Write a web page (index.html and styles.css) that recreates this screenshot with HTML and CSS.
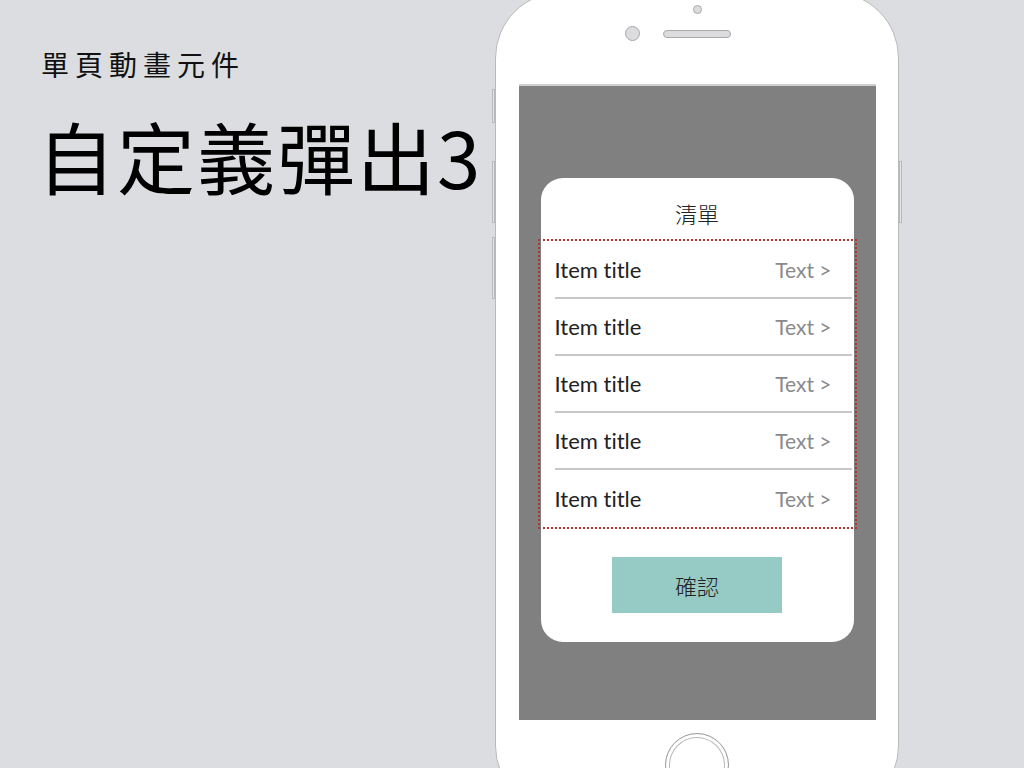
FILE: index.html
```html
<!DOCTYPE html>
<html lang="zh-Hant">
<head>
    <meta charset="UTF-8">
    <meta name="viewport" content="width=device-width, initial-scale=1.0">
    <title>單頁動畫元件 - 自定義彈出3</title>
    <link rel="stylesheet" href="styles.css">
</head>
<body>
    <div class="slide">
        <div class="intro">
            <div class="subtitle">單頁動畫元件</div>
            <h1 class="title">自定義彈出3</h1>
        </div>

        <div class="phone">
            <div class="side-btn side-mute"></div>
            <div class="side-btn side-vol-up"></div>
            <div class="side-btn side-vol-down"></div>
            <div class="side-btn side-power"></div>

            <div class="phone-top">
                <div class="sensor"></div>
                <div class="earpiece">
                    <div class="camera"></div>
                    <div class="speaker"></div>
                    <div></div>
                </div>
            </div>

            <div class="screen">
                <div class="modal">
                    <div class="modal-title">清單</div>
                    <ul class="list">
                        <li class="list-row">
                            <span class="item-title">Item title</span>
                            <span class="item-detail">Text &gt;</span>
                        </li>
                        <li class="list-row">
                            <span class="item-title">Item title</span>
                            <span class="item-detail">Text &gt;</span>
                        </li>
                        <li class="list-row">
                            <span class="item-title">Item title</span>
                            <span class="item-detail">Text &gt;</span>
                        </li>
                        <li class="list-row">
                            <span class="item-title">Item title</span>
                            <span class="item-detail">Text &gt;</span>
                        </li>
                        <li class="list-row">
                            <span class="item-title">Item title</span>
                            <span class="item-detail">Text &gt;</span>
                        </li>
                    </ul>
                    <div class="modal-footer">
                        <button class="confirm-btn">確認</button>
                    </div>
                </div>
            </div>

            <div class="phone-bottom">
                <div class="home-btn"></div>
            </div>
        </div>
    </div>
</body>
</html>
```

FILE: styles.css
```css
body {
    margin: 0;
    padding: 0;
    background-color: #dcdde0;
    font-family: "Noto Sans CJK TC", "Liberation Sans", sans-serif;
    overflow: hidden;
    width: 1024px;
    height: 768px;
}

.slide {
    display: flex;
    width: 1024px;
    height: 768px;
    overflow: hidden;
}

/* Текстовая часть слева */
.intro {
    width: 495px;
    padding: 40px 0 0 41px;
    box-sizing: border-box;
}

.subtitle {
    font-size: 28px;
    line-height: 48px;
    letter-spacing: 6px;
    color: #111;
    font-weight: 400;
}

.title {
    margin: 17px 0 0 -4px;
    font-size: 78px;
    line-height: 100px;
    font-weight: 400;
    letter-spacing: 2px;
    color: #000;
}

/* Телефон */
.phone {
    position: relative;
    flex-shrink: 0;
    width: 404px;
    height: 820px;
    margin-top: -8px;
    background: #fff;
    border: 1px solid #b9b9bb;
    border-radius: 66px;
    box-sizing: border-box;
    display: flex;
    flex-direction: column;
    align-items: center;
}

.side-btn {
    position: absolute;
    width: 3px;
    background: #e4e4e6;
    border: 1px solid #b9b9bb;
    box-sizing: border-box;
}

.side-mute {
    left: -4px;
    top: 96px;
    height: 34px;
}

.side-vol-up {
    left: -4px;
    top: 168px;
    height: 62px;
}

.side-vol-down {
    left: -4px;
    top: 244px;
    height: 62px;
}

.side-power {
    right: -4px;
    top: 168px;
    height: 62px;
}

.phone-top {
    width: 100%;
    height: 91px;
    display: flex;
    flex-direction: column;
    align-items: center;
}

.sensor {
    width: 9px;
    height: 9px;
    margin-top: 12px;
    border-radius: 50%;
    background: #dcdcde;
    border: 1px solid #a9a9ab;
    box-sizing: border-box;
}

.earpiece {
    width: 100%;
    margin-top: 12px;
    display: grid;
    grid-template-columns: 1fr auto 1fr;
    align-items: center;
}

.camera {
    justify-self: end;
    width: 15px;
    height: 15px;
    margin-right: 23px;
    border-radius: 50%;
    background: #dcdcde;
    border: 1px solid #a9a9ab;
    box-sizing: border-box;
}

.speaker {
    width: 68px;
    height: 8px;
    border-radius: 4px;
    background: #dcdcde;
    border: 1px solid #a9a9ab;
    box-sizing: border-box;
}

/* Экран */
.screen {
    width: 357px;
    height: 636px;
    background: #808080;
    border-top: 2px solid #cfcfd1;
    box-sizing: border-box;
    padding: 92px 22px 0 22px;
}

.modal {
    height: 464px;
    background: #fff;
    border-radius: 22px;
    display: flex;
    flex-direction: column;
}

.modal-title {
    padding-top: 19px;
    height: 64px;
    box-sizing: border-box;
    text-align: center;
    font-size: 22px;
    line-height: 32px;
    font-weight: 300;
    color: #222;
}

.list {
    list-style: none;
    margin: 0;
    padding: 0;
    outline: 2px dotted #b8322a;
    outline-offset: 1px;
}

.list-row {
    display: flex;
    justify-content: space-between;
    align-items: center;
    height: 57px;
    margin: 0 2px 0 14px;
    padding-right: 20px;
    border-bottom: 2px solid #c8c8ca;
    box-sizing: border-box;
    font-family: Lato, "Liberation Sans", sans-serif;
    font-size: 22px;
    font-variant-ligatures: none;
}

.list-row:last-child {
    border-bottom: none;
    height: 56px;
}

.item-title {
    color: #222;
}

.item-detail {
    font-size: 21px;
    color: #8a8a8c;
}

.modal-footer {
    display: flex;
    justify-content: center;
    padding-top: 31px;
}

.confirm-btn {
    width: 170px;
    height: 56px;
    border: none;
    background: #96cbc5;
    font-family: "Noto Sans CJK TC", sans-serif;
    font-size: 22px;
    font-weight: 300;
    color: #222;
    padding: 0;
}

.phone-bottom {
    width: 100%;
    display: flex;
    justify-content: center;
    padding-top: 13px;
}

.home-btn {
    width: 64px;
    height: 64px;
    border-radius: 50%;
    border: 1px solid #9c9c9e;
    box-shadow: inset 0 0 0 3px #fff, inset 0 0 0 4px #b9b9bb;
    box-sizing: border-box;
}
```
